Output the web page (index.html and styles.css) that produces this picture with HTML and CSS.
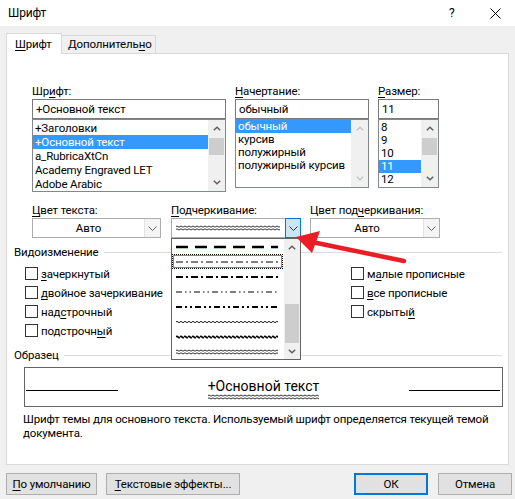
FILE: index.html
```html
<!DOCTYPE html>
<html lang="ru">
<head>
<meta charset="utf-8">
<title>Шрифт</title>
<link rel="stylesheet" href="styles.css">
</head>
<body>
<svg class="defs" width="0" height="0" aria-hidden="true">
  <defs>
    <pattern id="wv" patternUnits="userSpaceOnUse" width="4" height="4">
      <path d="M0 2 Q1 0.6 2 2 T4 2" fill="none" stroke="#000" stroke-width="0.9"/>
    </pattern>
    <pattern id="wvb" patternUnits="userSpaceOnUse" width="4" height="4">
      <path d="M0 2 Q1 0.6 2 2 T4 2" fill="none" stroke="#000" stroke-width="1.7"/>
    </pattern>
    <pattern id="wv2" patternUnits="userSpaceOnUse" width="4" height="6">
      <path d="M0 1.6 Q1 0.4 2 1.6 T4 1.6" fill="none" stroke="#000" stroke-width="0.8"/>
      <path d="M0 4.4 Q1 3.2 2 4.4 T4 4.4" fill="none" stroke="#000" stroke-width="0.8"/>
    </pattern>
  </defs>
</svg>

<div class="titlebar">
  <span class="title">Шрифт</span>
  <span class="help">?</span>
  <svg class="close" width="11" height="11" viewBox="0 0 11 11"><path d="M0.5 0.5 L10.5 10.5 M10.5 0.5 L0.5 10.5" stroke="#000" stroke-width="1" fill="none"/></svg>
</div>

<div class="tabs">
  <div class="tab active"><u>Ш</u>рифт</div>
  <div class="tab">Дополнитель<u>н</u>о</div>
</div>

<div class="panel">
  <div class="font-row">
    <div class="fcol c-font">
      <div class="lbl">Шр<u>и</u>фт:</div>
      <div class="input">+Основной текст</div>
      <div class="list list-font">
        <div class="items">
          <div class="item">+Заголовки</div>
          <div class="item sel">+Основной текст</div>
          <div class="item">a_RubricaXtCn</div>
          <div class="item">Academy Engraved LET</div>
          <div class="item">Adobe Arabic</div>
        </div>
        <div class="sbar">
          <div class="sbtn"><svg width="8" height="5" viewBox="0 0 8 5"><path d="M0.8 4.2 L4 1.2 L7.2 4.2" fill="none" stroke="#606060" stroke-width="1.5"/></svg></div>
          <div class="track"><div class="thumb"></div></div>
          <div class="sbtn"><svg width="8" height="5" viewBox="0 0 8 5"><path d="M0.8 0.8 L4 3.8 L7.2 0.8" fill="none" stroke="#606060" stroke-width="1.5"/></svg></div>
        </div>
      </div>
    </div>

    <div class="fcol c-style">
      <div class="lbl"><u>Н</u>ачертание:</div>
      <div class="input">обычный</div>
      <div class="list list-small">
        <div class="items">
          <div class="item sel">обычный</div>
          <div class="item">курсив</div>
          <div class="item">полужирный</div>
          <div class="item">полужирный курсив</div>
        </div>
        <div class="sbar disabled">
          <div class="sbtn"><svg width="8" height="5" viewBox="0 0 8 5"><path d="M0.8 4.2 L4 1.2 L7.2 4.2" fill="none" stroke="#c4c4c4" stroke-width="1.5"/></svg></div>
          <div class="track"></div>
          <div class="sbtn"><svg width="8" height="5" viewBox="0 0 8 5"><path d="M0.8 0.8 L4 3.8 L7.2 0.8" fill="none" stroke="#c4c4c4" stroke-width="1.5"/></svg></div>
        </div>
      </div>
    </div>

    <div class="fcol c-size">
      <div class="lbl"><u>Р</u>азмер:</div>
      <div class="input">11</div>
      <div class="list list-small list-size">
        <div class="items">
          <div class="item">8</div>
          <div class="item">9</div>
          <div class="item">10</div>
          <div class="item sel">11</div>
          <div class="item">12</div>
        </div>
        <div class="sbar">
          <div class="sbtn"><svg width="8" height="5" viewBox="0 0 8 5"><path d="M0.8 4.2 L4 1.2 L7.2 4.2" fill="none" stroke="#606060" stroke-width="1.5"/></svg></div>
          <div class="track"><div class="thumb"></div></div>
          <div class="sbtn"><svg width="8" height="5" viewBox="0 0 8 5"><path d="M0.8 0.8 L4 3.8 L7.2 0.8" fill="none" stroke="#606060" stroke-width="1.5"/></svg></div>
        </div>
      </div>
    </div>
  </div>

  <div class="color-row">
    <div class="ccol c1">
      <div class="lbl"><u>Ц</u>вет текста:</div>
      <div class="combo">
        <span class="cval">Авто</span>
        <span class="cbtn"><svg width="9" height="5" viewBox="0 0 9 5"><path d="M0.5 0.5 L4.5 4.5 L8.5 0.5" fill="none" stroke="#606060" stroke-width="1"/></svg></span>
      </div>
    </div>
    <div class="ccol c2">
      <div class="lbl"><u>П</u>одчеркивание:</div>
      <div class="combo">
        <span class="cval left"><svg width="104" height="6"><rect width="104" height="6" fill="url(#wv2)"/></svg></span>
        <span class="cbtn hot"><svg width="9" height="5" viewBox="0 0 9 5"><path d="M0.5 0.5 L4.5 4.5 L8.5 0.5" fill="none" stroke="#333" stroke-width="1"/></svg></span>
      </div>
      <div class="dropdown">
        <div class="dd-items">
          <div class="dd-item"><svg width="102" height="4"><line x1="0" y1="2" x2="102" y2="2" stroke="#000" stroke-width="2.4" stroke-dasharray="12 7"/></svg></div>
          <div class="dd-item sel"><svg width="102" height="4"><line x1="0" y1="2" x2="102" y2="2" stroke="#000" stroke-width="1" stroke-dasharray="7 3 2 3"/></svg></div>
          <div class="dd-item"><svg width="102" height="4"><line x1="0" y1="2" x2="102" y2="2" stroke="#000" stroke-width="2.2" stroke-dasharray="7 3 2 3"/></svg></div>
          <div class="dd-item"><svg width="102" height="4"><line x1="0" y1="2" x2="102" y2="2" stroke="#000" stroke-width="1" stroke-dasharray="6 3 1.5 3 1.5 3"/></svg></div>
          <div class="dd-item"><svg width="102" height="4"><line x1="0" y1="2" x2="102" y2="2" stroke="#000" stroke-width="2.2" stroke-dasharray="6 3 2 3 2 3"/></svg></div>
          <div class="dd-item"><svg width="102" height="4"><rect width="102" height="4" fill="url(#wv)"/></svg></div>
          <div class="dd-item"><svg width="102" height="4"><rect width="102" height="4" fill="url(#wvb)"/></svg></div>
          <div class="dd-item"><svg width="102" height="6"><rect width="102" height="6" fill="url(#wv2)"/></svg></div>
        </div>
        <div class="sbar dd-sbar">
          <div class="sbtn"><svg width="8" height="5" viewBox="0 0 8 5"><path d="M0.8 4.2 L4 1.2 L7.2 4.2" fill="none" stroke="#606060" stroke-width="1.5"/></svg></div>
          <div class="track"><div class="thumb"></div></div>
          <div class="sbtn"><svg width="8" height="5" viewBox="0 0 8 5"><path d="M0.8 0.8 L4 3.8 L7.2 0.8" fill="none" stroke="#606060" stroke-width="1.5"/></svg></div>
        </div>
      </div>
    </div>
    <div class="ccol c3">
      <div class="lbl">Цвет под<u>ч</u>еркивания:</div>
      <div class="combo">
        <span class="cval">Авто</span>
        <span class="cbtn"><svg width="9" height="5" viewBox="0 0 9 5"><path d="M0.5 0.5 L4.5 4.5 L8.5 0.5" fill="none" stroke="#606060" stroke-width="1"/></svg></span>
      </div>
    </div>
  </div>

  <div class="group-title">Видоизменение</div>
  <div class="checks">
    <div class="chk"><span class="box"></span><span><u>з</u>ачеркнутый</span></div>
    <div class="chk"><span class="box"></span><span><u>д</u>войное зачеркивание</span></div>
    <div class="chk"><span class="box"></span><span>над<u>с</u>трочный</span></div>
    <div class="chk"><span class="box"></span><span>подстрочн<u>ы</u>й</span></div>
    <div class="chk"><span class="box"></span><span>м<u>а</u>лые прописные</span></div>
    <div class="chk"><span class="box"></span><span><u>в</u>се прописные</span></div>
    <div class="chk"><span class="box"></span><span>скрыты<u>й</u></span></div>
  </div>

  <div class="group-title sample-title">Образец</div>
  <div class="sample">
    <span class="sline left"></span>
    <span class="stext">+Основной текст<svg class="swave" width="100%" height="6"><rect width="100%" height="6" fill="url(#wv2)"/></svg></span>
    <span class="sline right"></span>
  </div>
  <p class="desc">Шрифт темы для основного текста. Используемый шрифт определяется текущей темой документа.</p>
</div>

<div class="buttons">
  <div class="btn b-default"><u>П</u>о умолчанию</div>
  <div class="btn b-effects"><u>Т</u>екстовые эффекты...</div>
  <div class="btn b-ok">ОК</div>
  <div class="btn b-cancel">Отмена</div>
</div>

<svg class="arrow" width="515" height="499" viewBox="0 0 515 499" aria-hidden="true">
  <line x1="312" y1="242" x2="404" y2="261" stroke="#ea1c24" stroke-width="4.5" stroke-linecap="round"/>
  <polygon points="296,237 320,231 312,253" fill="#ea1c24"/>
</svg>
</body>
</html>
```

FILE: styles.css
```css
* { box-sizing: border-box; }

body {
  margin: 0;
  width: 515px;
  height: 499px;
  overflow: hidden;
  position: relative;
  background: #f0f0f0;
  color: #000;
  font-family: Roboto, "Noto Sans", "Liberation Sans", sans-serif;
  font-size: 11.5px;
  letter-spacing: -0.15px;
}

u { text-decoration: underline; text-underline-offset: 2px; text-decoration-thickness: 1px; }

.defs { position: absolute; width: 0; height: 0; }

/* title bar */
.titlebar {
  height: 26px;
  background: #fff;
  display: flex;
  align-items: center;
  padding-left: 8px;
  font-size: 12px;
}
.title { flex: 1; }
.help { width: 12px; margin-right: 29px; font-size: 12px; }
.close { margin-right: 14px; }

/* tabs */
.tabs {
  display: flex;
  align-items: flex-end;
  padding: 7px 6px 0;
  height: 28px;
}
.tab {
  height: 18px;
  line-height: 16px;
  padding: 0 6px;
  border: 1px solid #d9d9d9;
  border-bottom: none;
  margin-bottom: 1px;
  margin-left: -1px;
  width: 95px;
}
.tab.active {
  position: relative;
  z-index: 1;
  height: 21px;
  width: 56px;
  margin-left: 0;
  margin-bottom: 0;
  background: #fff;
  padding: 1px 8px 0;
  line-height: 18px;
}

/* panel */
.panel {
  margin: -1px 6px 0;
  height: 412px;
  background: #fff;
  border: 1px solid #d9d9d9;
  position: relative;
}

.lbl { height: 16px; line-height: 16px; white-space: nowrap; }

.font-row {
  display: flex;
  padding: 29px 0 0 25px;
}
.fcol { margin-right: 9px; }
.c-font { width: 194px; }
.c-style { width: 134px; }
.c-size { width: 61px; }

.input {
  height: 20px;
  border: 1px solid #7a7a7a;
  padding: 0 3px;
  line-height: 18px;
  white-space: nowrap;
}

.list {
  display: flex;
  border: 1px solid #828790;
  height: 73px;
}
.list-small { height: 69px; }
.items { flex: 1; overflow: hidden; padding-top: 1px; }
.list-small .items { padding-top: 0; }
.list-size .items { padding-top: 1px; }
.item {
  height: 14px;
  line-height: 14px;
  padding-left: 2px;
  white-space: nowrap;
}
.list-small .item { height: 13px; line-height: 13px; }
.item.sel { background: #3399ff; color: #fff; }

.sbar {
  width: 17px;
  background: #f0f0f0;
  display: flex;
  flex-direction: column;
}
.sbtn {
  height: 17px;
  display: flex;
  align-items: center;
  justify-content: center;
  flex: none;
}
.track { flex: 1; }
.thumb {
  margin: 1px 1px 0;
  height: 17px;
  background: #cdcdcd;
}

/* colour row */
.color-row {
  display: flex;
  padding: 10px 0 0 25px;
}
.ccol { position: relative; }
.c1 { width: 129px; margin-right: 10px; }
.c2 { width: 130px; margin-right: 9px; }
.c3 { width: 130px; }

.combo {
  height: 20px;
  border: 1px solid #adadad;
  display: flex;
  background: #fff;
}
.cval {
  flex: 1;
  line-height: 18px;
  display: flex;
  align-items: center;
  justify-content: center;
}
.cval.left { justify-content: flex-start; padding-left: 4px; }
.cbtn {
  width: 16px;
  border-left: 1px solid #e3e3e3;
  background: #f4f4f4;
  display: flex;
  align-items: center;
  justify-content: center;
}
.cbtn.hot {
  border: 1px solid #0078d7;
  background: #cce4f7;
  margin: -1px -1px -1px 0;
  width: 16px;
}

/* open dropdown list */
.dropdown {
  position: absolute;
  top: 36px;
  left: 0;
  width: 130px;
  height: 122px;
  border: 1px solid #646464;
  background: #fff;
  display: flex;
  z-index: 2;
}
.dd-items { flex: 1; overflow: hidden; }
.dd-item {
  height: 15px;
  display: flex;
  align-items: center;
  padding-left: 4px;
}
.dd-item.sel {
  height: 13px;
  margin: 1px 2px 1px 1px;
  padding-left: 2px;
  border: 1px solid #3399ff;
  outline: 1px dotted #000;
}
.dd-sbar { width: 16px; }
.dd-sbar .thumb { margin-top: 48px; height: 39px; }

/* group titles */
.group-title {
  display: flex;
  align-items: center;
  height: 16px;
  line-height: 16px;
  padding-left: 7px;
  margin-top: 6px;
}
.group-title::after {
  content: "";
  flex: 1;
  height: 1px;
  background: #dcdcdc;
  margin: 1px 6px 0 5px;
}
.sample-title { margin-top: 7px; }

/* checkboxes */
.checks {
  display: grid;
  grid-template-columns: 326px 1fr;
  grid-template-rows: repeat(4, 19px);
  grid-auto-flow: column;
  padding-left: 18px;
  margin-top: 4px;
}
.chk { display: flex; align-items: center; white-space: nowrap; }
.box {
  width: 13px;
  height: 13px;
  border: 1px solid #333;
  background: #fff;
  margin-right: 3px;
  flex: none;
}

/* sample */
.sample {
  margin: 4px 5px 0 17px;
  height: 40px;
  border: 1px solid #646464;
  display: flex;
  align-items: center;
  justify-content: space-between;
}
.sline { flex: none; width: 92px; height: 1px; background: #000; margin-top: 6px; }
.sline.left { margin-left: 1px; }
.sline.right { margin-right: 2px; width: 91px; }
.stext {
  position: relative;
  font-size: 14px;
  letter-spacing: 0;
  line-height: 18px;
  margin-top: -2px;
  white-space: nowrap;
}
.swave { position: absolute; left: 0; bottom: -5px; }

.desc {
  margin: 5px 0 0;
  padding-left: 16px;
  padding-right: 10px;
  line-height: 14px;
}

/* bottom buttons */
.buttons {
  display: flex;
  padding: 8px 3px 0 6px;
}
.btn {
  height: 22px;
  line-height: 20px;
  border: 1px solid #adadad;
  background: #e1e1e1;
  text-align: center;
  white-space: nowrap;
}
.b-default { width: 91px; margin-right: 9px; }
.b-effects { width: 134px; }
.b-ok { width: 74px; margin-left: auto; margin-right: 10px; border: 2px solid #0078d7; line-height: 18px; }
.b-cancel { width: 74px; }

/* annotation arrow */
.arrow { position: absolute; left: 0; top: 0; pointer-events: none; z-index: 5; }
```
